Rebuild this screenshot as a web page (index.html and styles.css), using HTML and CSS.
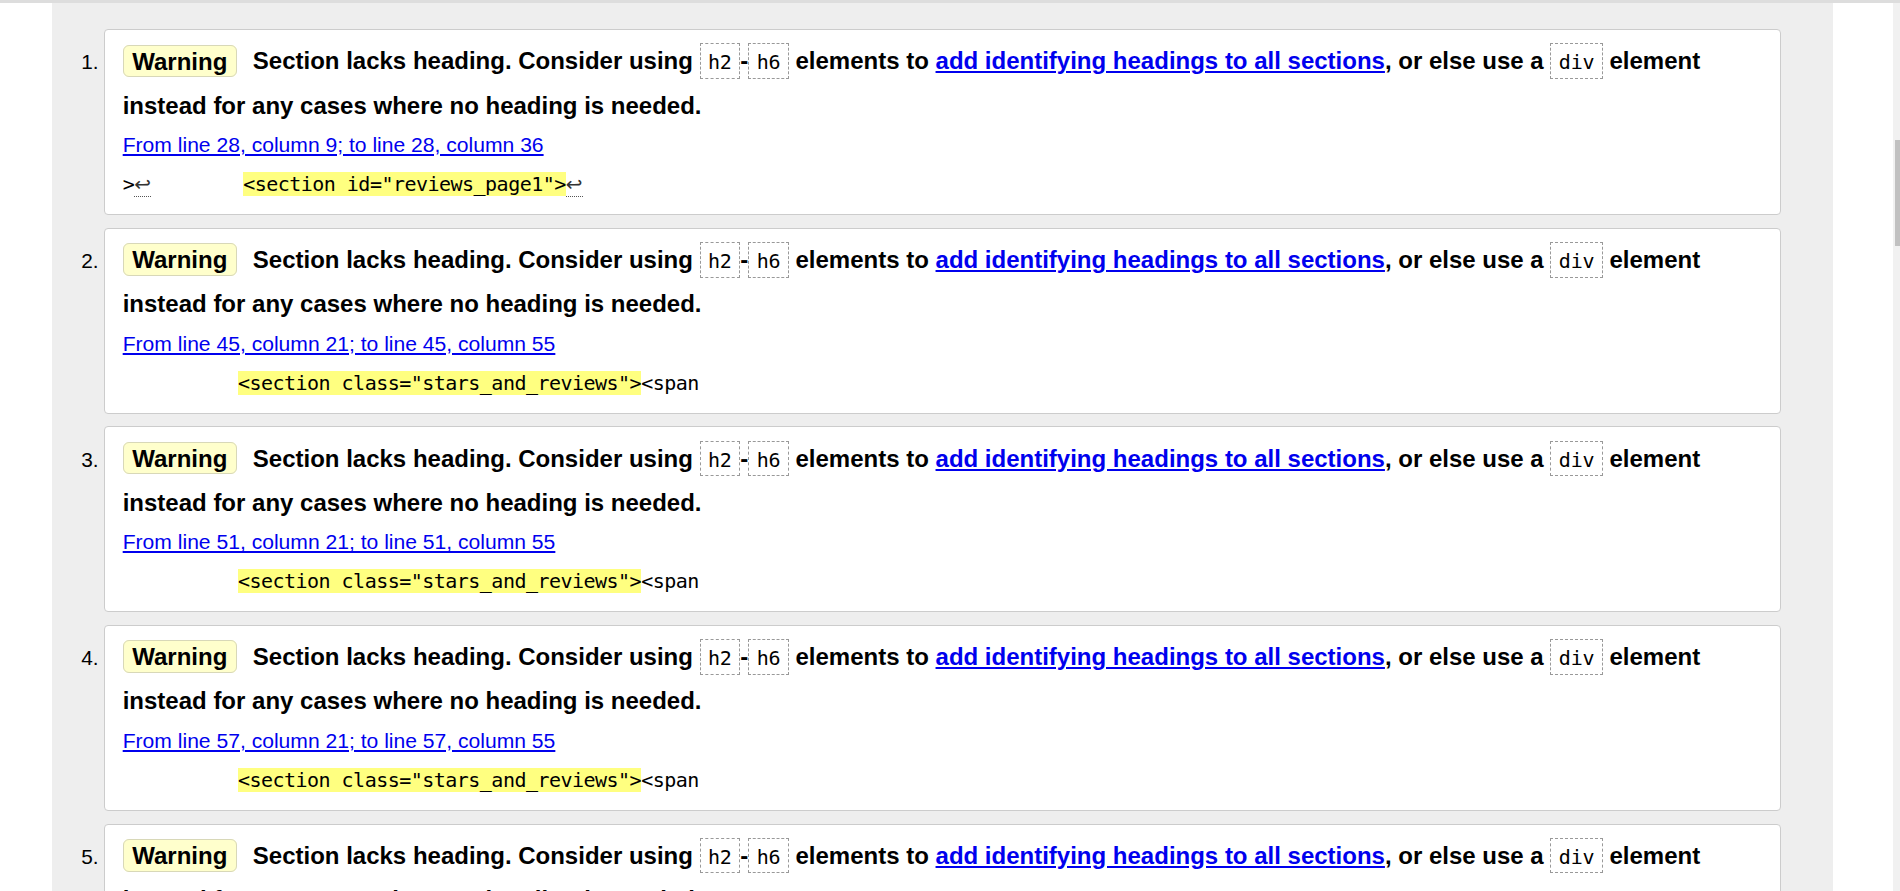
FILE: index.html
```html
<!DOCTYPE html>
<html lang="en">
<head>
<meta charset="utf-8">
<title>Validation results</title>
<link rel="stylesheet" href="styles.css">
</head>
<body>
<div class="topline"></div>
<div class="page">
  <div class="results">
    <ol class="messages">
      <li class="warning">
        <p class="message"><strong>Warning</strong><span>Section lacks heading. Consider using <code>h2</code>-<code>h6</code> elements to <a href="#">add identifying headings to all sections</a>, or else use a <code>div</code> element instead for any cases where no heading is needed.</span></p>
        <p class="location"><a href="#">From line 28, column 9; to line 28, column 36</a></p>
        <p class="extract"><code>&gt;<span class="lf" title="Line break">↩</span>        <b>&lt;section id="reviews_page1"&gt;</b><span class="lf" title="Line break">↩</span></code></p>
      </li>
      <li class="warning">
        <p class="message"><strong>Warning</strong><span>Section lacks heading. Consider using <code>h2</code>-<code>h6</code> elements to <a href="#">add identifying headings to all sections</a>, or else use a <code>div</code> element instead for any cases where no heading is needed.</span></p>
        <p class="location"><a href="#">From line 45, column 21; to line 45, column 55</a></p>
        <p class="extract"><code>          <b>&lt;section class="stars_and_reviews"&gt;</b>&lt;span</code></p>
      </li>
      <li class="warning">
        <p class="message"><strong>Warning</strong><span>Section lacks heading. Consider using <code>h2</code>-<code>h6</code> elements to <a href="#">add identifying headings to all sections</a>, or else use a <code>div</code> element instead for any cases where no heading is needed.</span></p>
        <p class="location"><a href="#">From line 51, column 21; to line 51, column 55</a></p>
        <p class="extract"><code>          <b>&lt;section class="stars_and_reviews"&gt;</b>&lt;span</code></p>
      </li>
      <li class="warning">
        <p class="message"><strong>Warning</strong><span>Section lacks heading. Consider using <code>h2</code>-<code>h6</code> elements to <a href="#">add identifying headings to all sections</a>, or else use a <code>div</code> element instead for any cases where no heading is needed.</span></p>
        <p class="location"><a href="#">From line 57, column 21; to line 57, column 55</a></p>
        <p class="extract"><code>          <b>&lt;section class="stars_and_reviews"&gt;</b>&lt;span</code></p>
      </li>
      <li class="warning">
        <p class="message"><strong>Warning</strong><span>Section lacks heading. Consider using <code>h2</code>-<code>h6</code> elements to <a href="#">add identifying headings to all sections</a>, or else use a <code>div</code> element instead for any cases where no heading is needed.</span></p>
        <p class="location"><a href="#">From line 63, column 21; to line 63, column 55</a></p>
        <p class="extract"><code>          <b>&lt;section class="stars_and_reviews"&gt;</b>&lt;span</code></p>
      </li>
    </ol>
  </div>
  <div class="gutter"></div>
  <div class="scrollbar"><div class="thumb"></div></div>
</div>
</body>
</html>
```

FILE: styles.css
```css
html, body {
  margin: 0;
  padding: 0;
}

body {
  background: #ffffff;
  color: #000000;
  font-family: "Liberation Sans", Arial, sans-serif;
  height: 891px;
  overflow: hidden;
}

.topline {
  height: 3px;
  background: #dddddd;
}

.page {
  display: flex;
  height: 888px;
}

.results {
  margin-left: 52px;
  width: 1781px;
  background: #eeeeee;
}

.gutter {
  flex: 1;
}

.scrollbar {
  width: 5px;
  background: #f1f1f1;
  padding-top: 137px;
  padding-left: 2px;
}

.thumb {
  height: 106px;
  background: #c1c1c1;
}

.messages {
  margin: 0;
  padding: 26.3px 52.3px 0 52.3px;
  font-size: 20.8px;
  list-style: decimal outside;
}

.messages li {
  background: #ffffff;
  border: 1px solid #cccccc;
  border-radius: 4px;
  padding: 9.2px 17.4px 7.9px 17.4px;
  margin-bottom: 12.9px;
}

.message {
  margin: 0;
  font-size: 24px;
  font-weight: bold;
  line-height: 44.3px;
}

.message strong {
  background: #ffffcc;
  border: 1px solid #d8d8b8;
  border-radius: 6px;
  padding: 1.8px 8.5px;
  margin-right: 16px;
}

.message code {
  font-family: "DejaVu Sans Mono", "Liberation Mono", monospace;
  font-size: 20px;
  font-weight: normal;
  line-height: 1;
  letter-spacing: -0.23px;
  border: 1px dashed #999999;
  padding: 6px 7.5px 3.5px 7.5px;
}

.message a {
  color: #0000ee;
  text-decoration: underline;
}

.location {
  margin: 0;
  font-size: 21.1px;
  line-height: 34px;
}

.location a {
  color: #0000ee;
  text-decoration: underline;
}

.extract {
  margin: 0;
  font-family: "DejaVu Sans Mono", "Liberation Mono", monospace;
  font-size: 20px;
  line-height: 44px;
  white-space: pre;
}

.extract code {
  font-family: inherit;
  font-size: 20px;
  letter-spacing: -0.52px;
}

.extract b {
  font-weight: normal;
  background: #ffff80;
}

.lf {
  font-family: "DejaVu Sans", sans-serif;
  letter-spacing: 0;
  color: #333333;
  border-bottom: 1px dotted #555555;
}
```
